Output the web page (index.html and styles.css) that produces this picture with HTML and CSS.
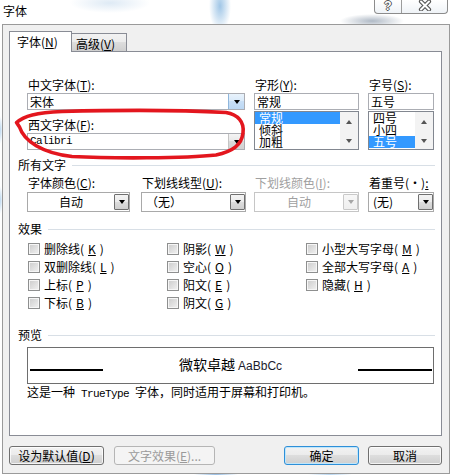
FILE: index.html
```html
<!DOCTYPE html>
<html lang="zh-CN">
<head>
<meta charset="utf-8">
<title>字体</title>
<link rel="stylesheet" href="styles.css">
</head>
<body>
<header class="titlebar">
  <span class="title">字体</span>
  <div class="caption">
    <span class="cap-btn help">?</span>
    <span class="cap-btn close"><svg width="18" height="11" viewBox="0 0 18 11"><path d="M5 1.5 L13 9.5 M13 1.5 L5 9.5" stroke="#555" stroke-width="4.2" stroke-linecap="round" fill="none"/><path d="M5 1.5 L13 9.5 M13 1.5 L5 9.5" stroke="#fff" stroke-width="2" stroke-linecap="round" fill="none"/></svg></span>
  </div>
</header>

<div class="dialog">
  <div class="tabs">
    <div class="tab active">字体(<u>N</u>)</div>
    <div class="tab">高级(<u>V</u>)</div>
  </div>

  <div class="page">
    <div class="fontgrid">
      <div class="col col-name">
        <div class="lbl">中文字体(<u>T</u>):</div>
        <div class="combo hot"><span class="val">宋体</span><span class="dd"><i class="tri"></i></span></div>
        <div class="lbl lbl2">西文字体(<u>F</u>):</div>
        <div class="combo"><span class="val mono">Calibri</span><span class="dd"><i class="tri"></i></span></div>
      </div>
      <div class="col col-style">
        <div class="lbl">字形(<u>Y</u>):</div>
        <div class="field">常规</div>
        <div class="listbox">
          <ul class="items"><li class="sel">常规</li><li>倾斜</li><li>加粗</li></ul>
          <div class="vscroll"><i class="tri up sb"></i><i class="tri sb"></i></div>
        </div>
      </div>
      <div class="col col-size">
        <div class="lbl">字号(<u>S</u>):</div>
        <div class="field">五号</div>
        <div class="listbox">
          <ul class="items"><li>四号</li><li>小四</li><li class="sel">五号</li></ul>
          <div class="vscroll"><i class="tri up sb"></i><i class="tri sb"></i></div>
        </div>
      </div>
    </div>

    <div class="group g-all">所有文字</div>
    <div class="attrs">
      <div class="attr a1">
        <div class="lbl">字体颜色(<u>C</u>):</div>
        <div class="ddl center"><span class="val">自动</span><span class="btn-dd"><i class="tri"></i></span></div>
      </div>
      <div class="attr a2">
        <div class="lbl">下划线线型(<u>U</u>):</div>
        <div class="ddl"><span class="val">（无）</span><span class="btn-dd"><i class="tri"></i></span></div>
      </div>
      <div class="attr a3 disabled">
        <div class="lbl">下划线颜色(<u>I</u>):</div>
        <div class="ddl center"><span class="val">自动</span><span class="btn-dd"><i class="tri"></i></span></div>
      </div>
      <div class="attr a4">
        <div class="lbl">着重号(·)<u>:</u></div>
        <div class="ddl"><span class="val">(无)</span><span class="btn-dd"><i class="tri"></i></span></div>
      </div>
    </div>

    <div class="group g-fx">效果</div>
    <div class="effects">
      <div class="chk"><span class="box"></span>删除线(<u>K</u>)</div>
      <div class="chk"><span class="box"></span>双删除线(<u>L</u>)</div>
      <div class="chk"><span class="box"></span>上标(<u>P</u>)</div>
      <div class="chk"><span class="box"></span>下标(<u>B</u>)</div>
      <div class="chk"><span class="box"></span>阴影(<u>W</u>)</div>
      <div class="chk"><span class="box"></span>空心(<u>O</u>)</div>
      <div class="chk"><span class="box"></span>阳文(<u>E</u>)</div>
      <div class="chk"><span class="box"></span>阴文(<u>G</u>)</div>
      <div class="chk"><span class="box"></span>小型大写字母(<u>M</u>)</div>
      <div class="chk"><span class="box"></span>全部大写字母(<u>A</u>)</div>
      <div class="chk"><span class="box"></span>隐藏(<u>H</u>)</div>
    </div>

    <div class="group g-prev">预览</div>
    <div class="preview">
      <span class="rule"></span>
      <span class="sample">微软卓越 <span class="latin">AaBbCc</span></span>
      <span class="rule"></span>
    </div>
    <p class="desc">这是一种<span class="mono"> TrueType </span>字体，同时适用于屏幕和打印机。</p>
  </div>

  <div class="actions">
    <span class="btn b-default">设为默认值(<u>D</u>)</span>
    <span class="btn b-effects disabled">文字效果(<u>E</u>)...</span>
    <span class="btn b-ok">确定</span>
    <span class="btn b-cancel">取消</span>
  </div>
</div>

<svg class="annot" width="452" height="475" viewBox="0 0 452 475">
  <path d="M226 112.5 C238 114.5 244.5 122 243 133 C241.5 145 233 151.5 216 155 C185 158.5 110 158.5 72 156.5 C42 153 24 141 19.5 127 L16.5 122.5 C24 116 36 112.5 62 111.5 C120 110 190 110.5 226 112.5"
        fill="none" stroke="#e3161e" stroke-width="3.6" stroke-linecap="round" stroke-linejoin="round"/>
</svg>
</body>
</html>
```

FILE: styles.css
```css
* { box-sizing: border-box; }

html, body { margin: 0; padding: 0; }

body {
  position: relative;
  width: 452px;
  height: 475px;
  overflow: hidden;
  font-family: "Noto Sans CJK SC", "Liberation Sans", sans-serif;
  font-size: 12px;
  line-height: 14px;
  color: #000;
  background:
    radial-gradient(ellipse 11px 26px at 220px 6px, rgba(150, 192, 228, 0.9), rgba(150, 192, 228, 0) 100%),
    radial-gradient(ellipse 32px 7px at 372px 21px, rgba(110, 128, 150, 0.55), rgba(110, 128, 150, 0) 100%),
    radial-gradient(ellipse 40px 10px at 110px 3px, rgba(200, 220, 238, 0.6), rgba(200, 220, 238, 0) 100%),
    radial-gradient(ellipse 22px 5px at 216px 475px, rgba(120, 170, 220, 0.8), rgba(120, 170, 220, 0) 100%),
    radial-gradient(ellipse 22px 5px at 330px 475px, rgba(150, 195, 235, 0.7), rgba(150, 195, 235, 0) 100%),
    radial-gradient(ellipse 3px 14px at 0px 130px, rgba(170, 205, 235, 0.8), rgba(170, 205, 235, 0) 100%),
    radial-gradient(ellipse 3px 14px at 0px 200px, rgba(170, 205, 235, 0.8), rgba(170, 205, 235, 0) 100%),
    #fff;
}

u { text-decoration: underline; text-underline-offset: 1px; }

.mono {
  font-family: "Liberation Mono", "DejaVu Sans Mono", monospace;
  font-size: 11px;
  letter-spacing: -0.6px;
}

/* ---------- title bar ---------- */
.titlebar {
  height: 24px;
  display: flex;
  justify-content: space-between;
  align-items: flex-start;
}
.title {
  margin: 4px 0 0 3px;
  font-size: 12px;
  line-height: 14px;
}
.caption {
  display: flex;
  height: 14px;
  margin-right: 4px;
  border: 1px solid #8c8c8c;
  border-top: 0;
  border-radius: 0 0 4px 4px;
  background: linear-gradient(rgba(255,255,255,0.6), rgba(235,240,245,0.8));
}
.cap-btn {
  display: flex;
  align-items: center;
  justify-content: center;
}
.help {
  width: 27px;
  border-right: 1px solid #9c9c9c;
  font-family: "Liberation Sans", sans-serif;
  font-weight: bold;
  font-size: 12px;
  line-height: 12px;
  color: #fff;
  text-shadow: 1px 0 #555, -1px 0 #555, 0 1px #555, 0 -1px #555;
  padding-bottom: 2px;
}
.close {
  width: 45px;
  padding-bottom: 3px;
}

/* ---------- dialog ---------- */
.dialog {
  margin-left: 2px;
  width: 448px;
  height: 450px;
  border: 1px solid #9a9a9a;
  background: #f0f0f0;
  padding: 6px 7px 0 6px;
}

.tabs {
  height: 20px;
  display: flex;
  align-items: flex-end;
}
.tab {
  width: 56px;
  height: 18px;
  margin-left: -1px;
  padding-left: 4px;
  border: 1px solid #898c95;
  border-bottom: 0;
  background: linear-gradient(#f2f2f2, #ebebeb 50%, #dddddd 50%, #cfcfcf);
  line-height: 19px;
  white-space: nowrap;
}
.tab.active {
  position: relative;
  z-index: 1;
  width: 63px;
  height: 21px;
  margin-left: 0;
  margin-bottom: -1px;
  padding-left: 7px;
  background: #fff;
  line-height: 20px;
}

.page {
  height: 385px;
  border: 1px solid #898c95;
  background: #fff;
  padding: 26px 6px 0 8px;
}

.lbl {
  padding-left: 1px;
  height: 14px;
  white-space: nowrap;
}

/* font row */
.fontgrid {
  display: flex;
  margin-left: 9px;
}
.col-name { width: 218px; }
.col-style { width: 105px; margin-left: 9px; }
.col-size { width: 66px; margin-left: 9px; }

.lbl2 { margin-top: 8px; }

.field, .combo {
  margin-top: 1px;
  height: 17px;
  border: 1px solid #abadb3;
  background: #fff;
}
.field {
  padding-left: 2px;
  line-height: 15px;
}
.combo { display: flex; }
.val {
  flex: 1;
  padding-left: 2px;
  line-height: 15px;
  white-space: nowrap;
  overflow: hidden;
}
.combo .val.mono { padding-left: 2px; }
.dd {
  width: 16px;
  display: flex;
  align-items: center;
  justify-content: center;
  border-left: 1px solid #c4c4c4;
  background: linear-gradient(#f4f4f4, #e8e8e8 50%, #dadada 50%, #d2d2d2);
}
.combo.hot .dd {
  border-left-color: #8fb6dc;
  background: linear-gradient(#e9f3fc, #d8e9f9 50%, #c8dff6 50%, #bcd8f4);
}

.tri {
  display: block;
  width: 0;
  height: 0;
  border-left: 3.5px solid transparent;
  border-right: 3.5px solid transparent;
  border-top: 4px solid #000;
}
.tri.up {
  border-top: 0;
  border-bottom: 4px solid #000;
}
.tri.sb { border-top-color: #555; border-bottom-color: #555; }
.tri.sb.up { border-top-color: transparent; }
.tri.sb:not(.up) { border-bottom-color: transparent; }

.listbox {
  margin-top: 1px;
  height: 39px;
  display: flex;
  border: 1px solid #828790;
  background: #fff;
}
.items {
  flex: 1;
  margin: 0;
  padding: 0 0 1px 0;
  list-style: none;
}
.items li {
  height: 12px;
  line-height: 12px;
  padding-left: 4px;
  white-space: nowrap;
}
.items li.sel {
  background: #3399ff;
  color: #fff;
}
.vscroll {
  width: 18px;
  display: flex;
  flex-direction: column;
  align-items: center;
  justify-content: space-between;
  padding: 8px 0 6px;
  background: #f3f3f3;
}

/* group headings */
.group {
  display: flex;
  align-items: center;
  height: 14px;
  white-space: nowrap;
}
.group::after {
  content: "";
  flex: 1;
  height: 1px;
  margin-left: 6px;
  background: #d8dfe6;
}
.g-all { margin-top: 8px; }
.g-fx { margin-top: 10px; }
.g-prev { margin-top: 16px; }

/* attributes row */
.attrs {
  display: flex;
  margin: 4px 0 0 9px;
}
.a1 { width: 103px; }
.a2 { width: 105px; margin-left: 11px; }
.a3 { width: 105px; margin-left: 8px; }
.a4 { width: 66px; margin-left: 9px; }

.ddl {
  margin-top: 2px;
  height: 20px;
  display: flex;
  border: 1px solid #a9a9a9;
  background: #fff;
}
.ddl .val {
  line-height: 18px;
  padding-left: 4px;
}
.ddl.center .val {
  text-align: center;
  padding-left: 0;
}
.btn-dd {
  width: 15px;
  margin: 1px 0;
  display: flex;
  align-items: center;
  justify-content: center;
  border: 1px solid #6f6f6f;
  border-radius: 1px;
  background: linear-gradient(#f3f3f3, #ebebeb 50%, #dddddd 50%, #cfcfcf);
}
.disabled .lbl, .disabled .val { color: #a0a0a0; }
.disabled .ddl { border-color: #c6c6c6; }
.disabled .btn-dd {
  border-color: #c9c9c9;
  background: linear-gradient(#f7f7f7, #efefef);
}
.disabled .tri { border-top-color: #a6a6a6; }

/* effects */
.effects {
  margin: 4px 0 0 10px;
  display: grid;
  grid-template-columns: 139px 139px 1fr;
  grid-template-rows: repeat(4, 18px);
  grid-auto-flow: column;
}
.chk {
  display: flex;
  align-items: center;
  gap: 4px;
  white-space: nowrap;
}
.box {
  width: 12px;
  height: 12px;
  flex: none;
  border: 1px solid #8e8f8f;
  background: linear-gradient(135deg, #cbcbcb, #f2f2f2);
  box-shadow: inset 0 0 0 1px #f6f6f6;
}

/* preview */
.preview {
  margin: 5px 0 0 9px;
  width: 407px;
  height: 37px;
  display: grid;
  grid-template-columns: 73px 1fr 74px;
  align-items: end;
  padding: 0 1px 0 2px;
  border: 1px solid #6e6e6e;
}
.rule {
  height: 2px;
  margin-bottom: 12px;
  background: #000;
}
.sample {
  text-align: center;
  font-size: 14px;
  line-height: 18px;
  margin-bottom: 8px;
  white-space: nowrap;
}
.latin {
  font-family: "Liberation Sans", sans-serif;
  font-size: 12px;
  color: #1c1c2c;
}
.desc {
  margin: 1px 0 0 9px;
  line-height: 14px;
  white-space: nowrap;
}

/* buttons */
.actions {
  display: flex;
  margin-top: 10px;
  height: 19px;
}
.btn {
  height: 19px;
  display: flex;
  align-items: center;
  justify-content: center;
  border: 1px solid #707070;
  border-radius: 3px;
  background: linear-gradient(#f2f2f2, #ebebeb 50%, #dddddd 50%, #cfcfcf);
  box-shadow: inset 0 0 0 1px rgba(255, 255, 255, 0.75);
  white-space: nowrap;
  line-height: 14px;
}
.b-default { width: 95px; }
.b-effects { width: 101px; margin-left: 10px; }
.b-ok { width: 75px; margin-left: auto; border-color: #2e8fd8; box-shadow: inset 0 0 0 1px #bfe6fb; }
.b-cancel { width: 74px; margin-left: 9px; }
.btn.disabled {
  border-color: #b5b5b5;
  background: #f4f4f4;
  color: #9a9a9a;
  box-shadow: none;
}

/* hand-drawn annotation overlay */
.annot {
  position: absolute;
  left: 0;
  top: 0;
  pointer-events: none;
}
```
